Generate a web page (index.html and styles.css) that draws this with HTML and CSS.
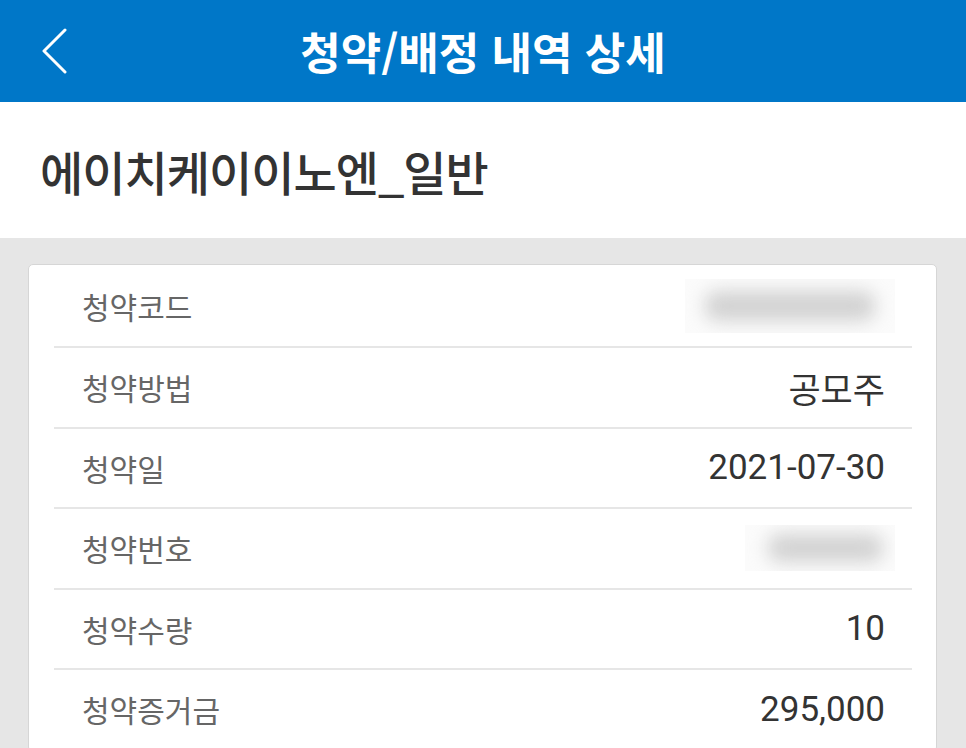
FILE: index.html
```html
<!DOCTYPE html>
<html lang="ko">
<head>
<meta charset="utf-8">
<title>청약/배정 내역 상세</title>
<link rel="stylesheet" href="styles.css">
</head>
<body>
<header class="appbar">
  <div class="back">
    <svg width="30" height="46" viewBox="0 0 30 46"><polyline points="25,2 4,23 25,44" fill="none" stroke="#ffffff" stroke-width="3" stroke-linecap="round" stroke-linejoin="round"/></svg>
  </div>
  <h1 class="appbar-title">청약/배정 내역 상세</h1>
  <div class="spacer"></div>
</header>
<section class="title-block">
  <h2 class="stock-name">에이치케이이노엔_일반</h2>
</section>
<main class="content">
  <div class="card">
    <div class="row first">
      <span class="label">청약코드</span>
      <span class="value"><span class="blur-box blur-box-code"><span class="blur blur-code"></span></span></span>
    </div>
    <div class="row">
      <span class="label">청약방법</span>
      <span class="value">공모주</span>
    </div>
    <div class="row">
      <span class="label">청약일</span>
      <span class="value">2021-07-30</span>
    </div>
    <div class="row">
      <span class="label">청약번호</span>
      <span class="value"><span class="blur-box blur-box-no"><span class="blur blur-no"></span></span></span>
    </div>
    <div class="row">
      <span class="label">청약수량</span>
      <span class="value">10</span>
    </div>
    <div class="row">
      <span class="label">청약증거금</span>
      <span class="value">295,000</span>
    </div>
  </div>
</main>
</body>
</html>
```

FILE: styles.css
```css
* { box-sizing: border-box; }
html, body { margin: 0; padding: 0; }
body {
  background: #e6e6e6;
  font-family: Roboto, "Noto Sans CJK KR", sans-serif;
  width: 966px;
  height: 748px;
  overflow: hidden;
}
.appbar {
  height: 102px;
  background: #0077c8;
  display: grid;
  grid-template-columns: 100px 1fr 100px;
  align-items: center;
}
.back {
  padding-left: 40px;
  display: flex;
  align-items: center;
  height: 102px;
}
.appbar-title {
  margin: 0;
  text-align: center;
  color: #ffffff;
  font-family: "Noto Sans CJK KR", sans-serif;
  font-weight: 700;
  font-size: 44px;
  letter-spacing: 0px;
}
.title-block {
  height: 136px;
  background: #ffffff;
  display: flex;
  align-items: center;
  padding-left: 40px;
}
.stock-name {
  margin: 0;
  font-family: "Noto Sans CJK KR", sans-serif;
  font-weight: 500;
  font-size: 47px;
  color: #333333;
  letter-spacing: -1px;
}
.content {
  padding: 26px 29px 0 28px;
}
.card {
  background: #ffffff;
  border: 1px solid #d6d6d6;
  border-radius: 5px;
  padding: 0 24px 0 25px;
}
.row {
  height: 80.5px;
  display: flex;
  align-items: center;
  justify-content: space-between;
  border-bottom: 2px solid #e6e6e6;
  padding: 0 27px 0 28px;
}
.row.first { height: 83px; }
.label {
  font-family: "Noto Sans CJK KR", sans-serif;
  font-size: 30px;
  color: #666666;
}
.value {
  font-family: Roboto, "Noto Sans CJK KR", sans-serif;
  font-size: 35px;
  color: #333333;
  display: flex;
  align-items: center;
}
.blur-box {
  display: flex;
  align-items: center;
  justify-content: center;
  background: #fbfbfb;
  overflow: hidden;
}
.blur-box-code { width: 210px; height: 54px; margin-right: -10px; }
.blur-box-no { width: 150px; height: 46px; margin-right: -10px; }
.blur {
  display: block;
  background: #d2d2d2;
  filter: blur(9px);
  border-radius: 12px;
}
.blur-code { width: 170px; height: 30px; }
.blur-no { width: 115px; height: 28px; margin-left: 10px; }
```
